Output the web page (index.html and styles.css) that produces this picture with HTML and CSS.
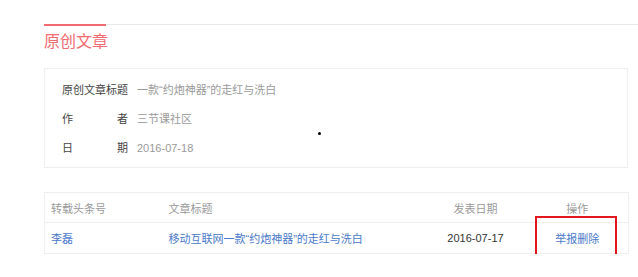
FILE: index.html
```html
<!DOCTYPE html>
<html lang="zh">
<head>
<meta charset="utf-8">
<title>原创文章</title>
<link rel="stylesheet" href="styles.css">
</head>
<body>
<div class="page">
  <div class="tabbar">
    <div class="tab">原创文章</div>
    <div class="tabline"></div>
  </div>
  <div class="info">
    <div class="row"><span class="label">原创文章标题</span><span class="value">一款“约炮神器”的走红与洗白</span></div>
    <div class="row"><span class="label">作者</span><span class="value">三节课社区</span></div>
    <div class="row"><span class="label">日期</span><span class="value">2016-07-18</span></div>
    <span class="dot"></span>
  </div>
  <table class="list">
    <thead>
      <tr><th class="c1">转载头条号</th><th class="c2">文章标题</th><th class="c3">发表日期</th><th class="c4">操作</th></tr>
    </thead>
    <tbody>
      <tr><td class="c1"><a class="link">李磊</a></td><td class="c2"><a class="link">移动互联网一款“约炮神器”的走红与洗白</a></td><td class="c3 date">2016-07-17</td><td class="c4 op"><a class="link">举报删除</a><span class="mark"></span></td></tr>
    </tbody>
  </table>
</div>
</body>
</html>
```
FILE: styles.css
```css
* { box-sizing: border-box; }
body {
  margin: 0;
  background: #fff;
  font-family: "Liberation Sans", "Noto Sans CJK SC", sans-serif;
  font-size: 11px;
  color: #444;
}
.page {
  width: 638px;
  padding: 24px 0 0 44px;
}
.tabbar {
  display: flex;
  align-items: flex-start;
}
.tab {
  width: 62px;
  border-top: 2px solid #f26b70;
  color: #f26b70;
  font-size: 16px;
  line-height: 20px;
  padding-top: 6px;
  margin-bottom: 16px;
  white-space: nowrap;
}
.tabline {
  flex: 1;
  border-top: 1px solid #e8e8e8;
}
.info {
  position: relative;
  width: 584px;
  border: 1px solid #eeeeee;
  padding: 7px 0 4px 17px;
}
.row {
  display: flex;
  line-height: 29px;
  height: 29px;
}
.label {
  flex: none;
  width: 66px;
  color: #444;
  white-space: nowrap;
  text-align: justify;
  text-align-last: justify;
}
.value {
  margin-left: 9px;
  color: #9a9a9a;
  white-space: nowrap;
}
.dot {
  position: absolute;
  left: 273px;
  top: 63px;
  width: 3px;
  height: 3px;
  border-radius: 50%;
  background: #000;
}
.list {
  margin-top: 24px;
  width: 584px;
  border-collapse: collapse;
  border: 1px solid #eeeeee;
  table-layout: fixed;
}
.list th, .list td {
  height: 30px;
  padding: 0 6px;
  font-weight: normal;
  text-align: left;
  white-space: nowrap;
}
.list th {
  color: #9a9a9a;
  border-bottom: 1px solid #eeeeee;
}
.list td {
  height: 31px;
}
.c1 { width: 118px; }
.c2 { width: 262px; }
.c3 { width: 102px; text-align: center !important; }
.c4 { width: 102px; text-align: center !important; }
.date { color: #333; }
.link { color: #4a79c9; text-decoration: none; }
.op { position: relative; }
.mark {
  position: absolute;
  left: 8px;
  top: -7px;
  width: 82px;
  height: 43px;
  border: 2px solid #e2161c;
}
```
